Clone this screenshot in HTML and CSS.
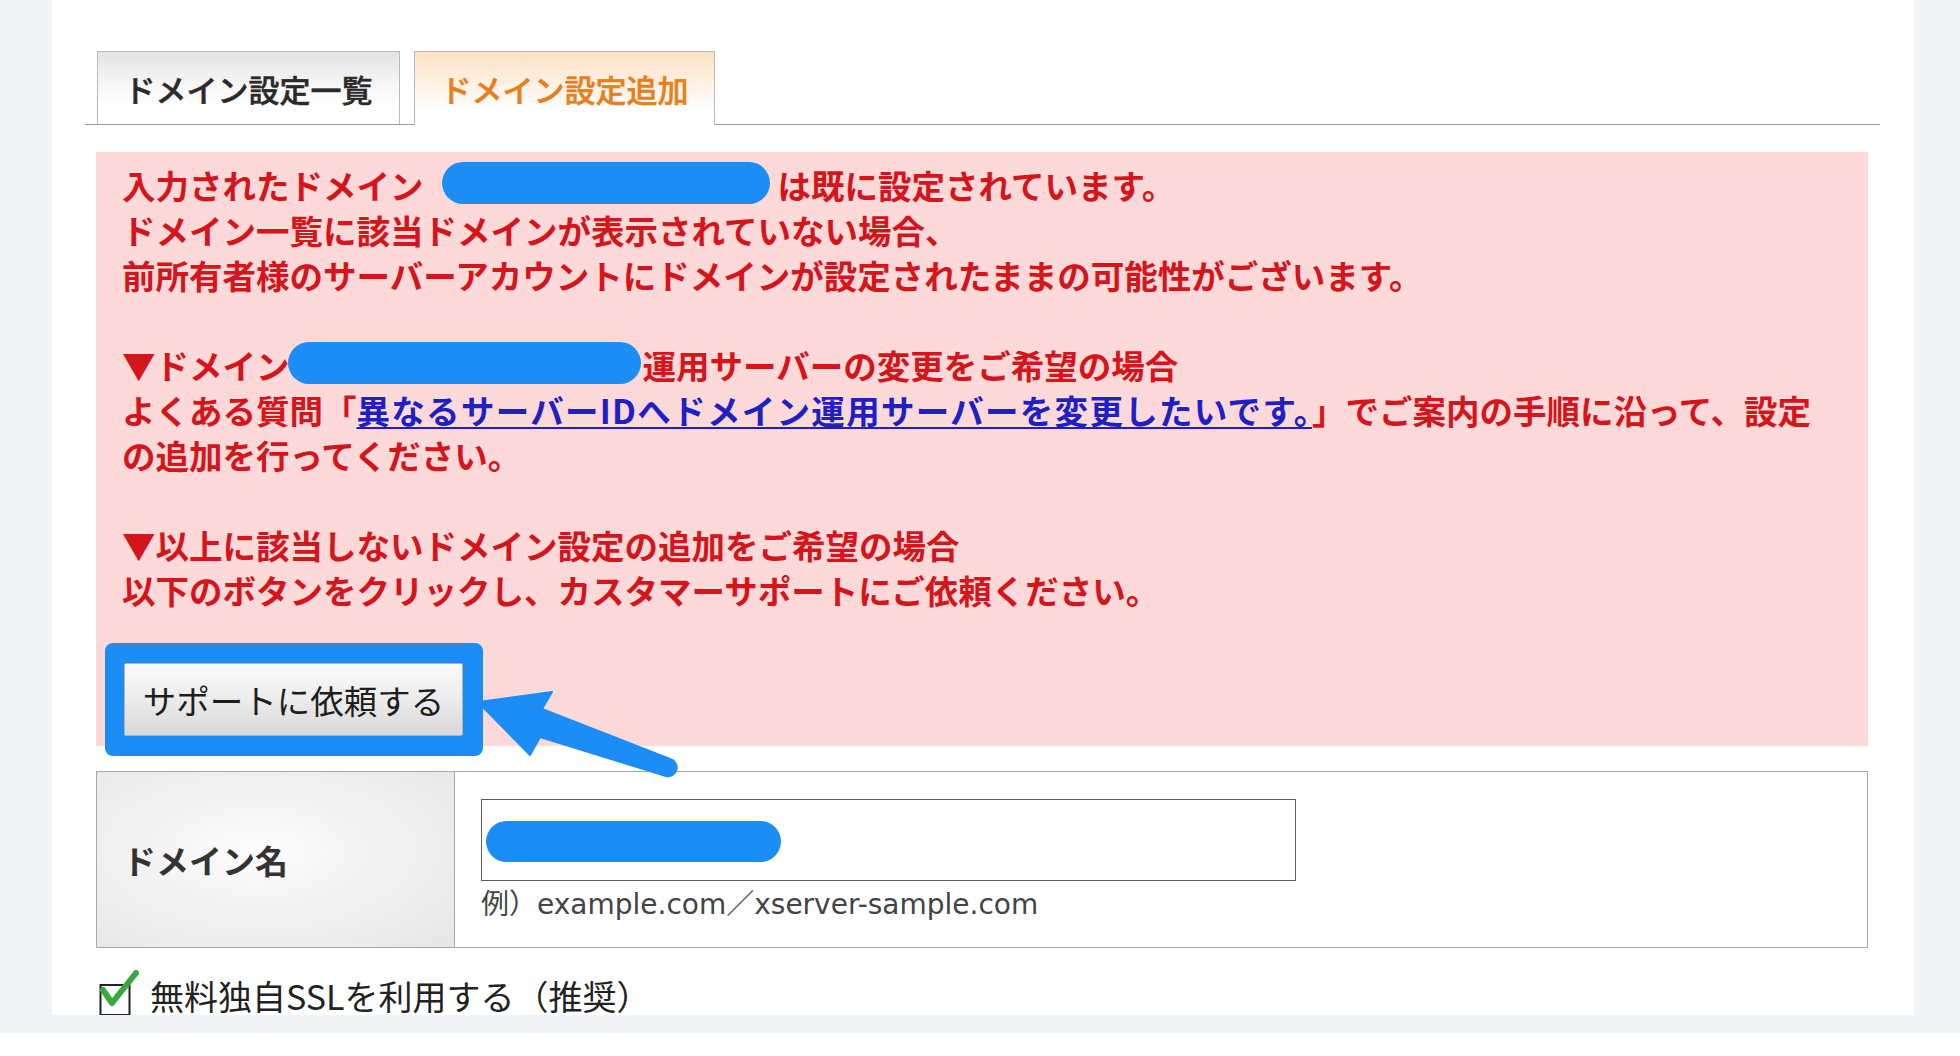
FILE: index.html
```html
<!DOCTYPE html>
<html lang="ja">
<head>
<meta charset="utf-8">
<title>ドメイン設定追加</title>
<link rel="stylesheet" href="styles.css">
</head>
<body>
<div class="page">
  <main class="panel">
    <nav class="tabs">
      <a class="tab">ドメイン設定一覧</a>
      <a class="tab tab-active">ドメイン設定追加</a>
    </nav>

    <section class="alert">
      <p class="msg">入力されたドメイン<span class="mask mask-a"></span>は既に設定されています。<br>ドメイン一覧に該当ドメインが表示されていない場合、<br>前所有者様のサーバーアカウントにドメインが設定されたままの可能性がございます。<br><br>▼ドメイン<span class="mask mask-b"></span>運用サーバーの変更をご希望の場合<br>よくある質問「<a class="faq">異なるサーバーIDへドメイン運用サーバーを変更したいです。</a>」でご案内の手順に沿って、設定<br>の追加を行ってください。<br><br>▼以上に該当しないドメイン設定の追加をご希望の場合<br>以下のボタンをクリックし、カスタマーサポートにご依頼ください。</p>
      <div class="highlight"><button class="support-btn" type="button">サポートに依頼する</button></div>
    </section>

    <svg class="arrow" width="215" height="100" viewBox="0 0 215 100">
      <path d="M8 22 L82 12 L72 29 L200 79 A8.5 8.5 0 0 1 196 96 L70 57 L60 75 Z" fill="#1d8df6" stroke="#1d8df6" stroke-width="2" stroke-linejoin="round"/>
    </svg>

    <table class="form-table">
      <tr>
        <th>ドメイン名</th>
        <td>
          <div class="domain-input"><span class="mask mask-c"></span></div>
          <p class="hint">例）example.com／xserver-sample.com</p>
        </td>
      </tr>
    </table>

    <label class="ssl">
      <svg class="check" width="42" height="46" viewBox="0 0 42 46">
        <rect x="1.5" y="15" width="29" height="30" fill="#fff" stroke="#222" stroke-width="2"/>
        <path d="M4 20 L13 33 L37 3" fill="none" stroke="#3aa83e" stroke-width="6" stroke-linecap="round" stroke-linejoin="round"/>
      </svg>
      <span>無料独自SSLを利用する（推奨）</span>
    </label>
  </main>
</div>
</body>
</html>
```

FILE: styles.css
```css
* {
  box-sizing: border-box;
}

html,
body {
  margin: 0;
  padding: 0;
}

body {
  width: 1960px;
  height: 1056px;
  overflow: hidden;
  background: #ffffff;
  font-family: "Noto Sans CJK JP", "Noto Sans", sans-serif;
}

.page {
  height: 1033px;
  padding: 0 46px 18px 52px;
  background: #f2f3f5;
}

.panel {
  position: relative;
  height: 1015px;
  overflow: hidden;
  padding-top: 51px;
  background: #ffffff;
}

/* Tabs */
.tabs {
  display: flex;
  align-items: flex-start;
  gap: 14px;
  height: 74px;
  margin: 0 34px 0 33px;
  padding-left: 12px;
  border-bottom: 1px solid #9a9a9a;
}

.tab {
  display: flex;
  align-items: center;
  justify-content: center;
  width: 303px;
  height: 73px;
  border: 1px solid #b9b9b9;
  border-bottom: none;
  background: linear-gradient(#e3e3e3 0%, #f6f6f6 45%, #ffffff 75%);
  color: #2a2a2a;
  font-size: 31px;
  font-weight: 500;
  line-height: 1;
  -webkit-text-stroke: 0.5px currentColor;
}

.tab-active {
  width: 301px;
  height: 74px;
  margin-bottom: -1px;
  background: linear-gradient(#fde1c8 0%, #fff1e4 45%, #ffffff 80%);
  color: #e67f1c;
}

/* Alert */
.alert {
  display: flow-root;
  margin: 27px 46px 0 44px;
  padding: 10px 10px 0 26px;
  background: #fdd9d9;
}

.msg {
  margin: 0;
  font-size: 33.5px;
  line-height: 45px;
  font-weight: 700;
  color: #d4151b;
  white-space: nowrap;
}

.mask {
  display: inline-block;
  background: #1d8df6;
  border-radius: 22px;
}

.mask-a {
  width: 328px;
  height: 42px;
  margin: 0 8px 0 18px;
  vertical-align: -5px;
}

.mask-b {
  width: 353px;
  height: 42px;
  margin: 0 2px 0 -2px;
  vertical-align: -5px;
}

.faq {
  color: #1f1fc4;
  letter-spacing: 1.3px;
  text-decoration: underline;
  text-decoration-thickness: 2px;
  text-underline-offset: 3px;
}

.highlight {
  width: fit-content;
  margin: 31px 0 -10px -17px;
  padding: 20px 20px 20px 19px;
  background: #1d8df6;
  border-radius: 8px;
}

.support-btn {
  display: block;
  width: 339px;
  height: 73px;
  padding: 0;
  border: 1px solid #b3b3b3;
  border-radius: 2px;
  background: linear-gradient(#fafafa 0%, #ececec 50%, #d8d8d8 100%);
  color: #1e1e1e;
  font-family: "Noto Sans CJK JP", sans-serif;
  font-size: 33.5px;
  line-height: 1;
}

.arrow {
  position: absolute;
  left: 418px;
  top: 680px;
}

/* Form table */
.form-table {
  width: 1772px;
  margin: 25px 46px 0 44px;
  border-collapse: collapse;
  border: 1px solid #a9a9a9;
}

.form-table th {
  width: 358px;
  padding: 0 0 0 26px;
  border-right: 1px solid #a9a9a9;
  background: radial-gradient(ellipse at 45% 45%, #fdfdfd 0%, #f3f3f3 40%, #e6e6e6 100%);
  color: #333333;
  font-size: 33px;
  font-weight: 700;
  text-align: left;
}

.form-table td {
  padding: 27px 26px 24px 26px;
  vertical-align: top;
  background: #ffffff;
}

.domain-input {
  display: flex;
  align-items: center;
  width: 815px;
  height: 82px;
  padding: 2px 0 0 4px;
  border: 1px solid #5e5e5e;
  background: #ffffff;
}

.mask-c {
  width: 295px;
  height: 41px;
}

.hint {
  margin: 6px 0 0;
  font-family: "DejaVu Sans", "Noto Sans CJK JP", sans-serif;
  font-size: 28px;
  line-height: 36px;
  color: #444444;
}

/* SSL checkbox */
.ssl {
  display: flex;
  align-items: center;
  gap: 9px;
  margin: 26px 0 0 47px;
  color: #222222;
  font-size: 34px;
  line-height: 44px;
}

.check {
  display: block;
  flex: none;
  margin-top: -6px;
}
```
